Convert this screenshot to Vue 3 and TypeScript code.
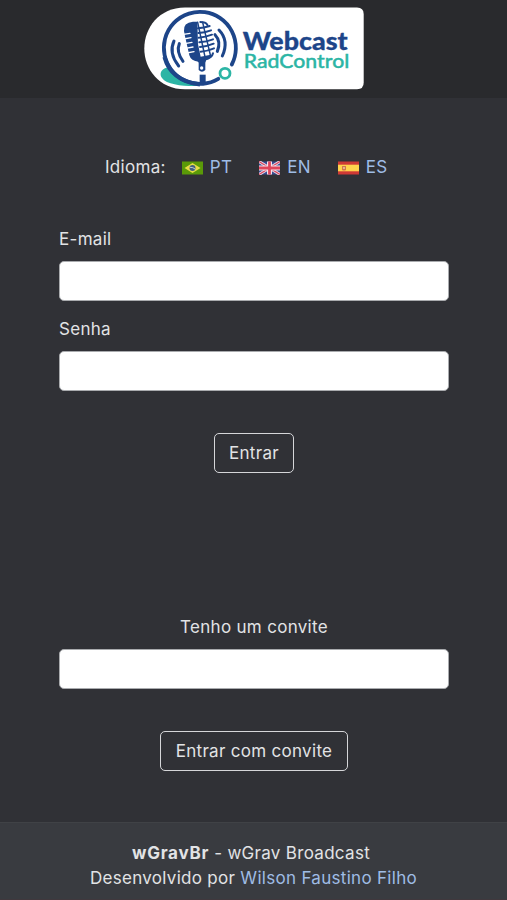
<script setup lang="ts">
import { ref } from 'vue'

const email = ref<string>('')
const password = ref<string>('')
const invite = ref<string>('')
</script>

<template>
  <div class="page">
    <header class="top">
      <svg class="logo" viewBox="0 0 220 83" role="img" aria-label="Webcast RadControl">
        <path d="M41 .5H213Q219.7 .5 219.7 7V75.5Q219.7 82.3 213 82.3H41C15 82.3 .3 62 .3 41.5S15 .5 41 .5Z" fill="#fff" />
        <path d="M23 60.5C17 62 15 67 18 71C23 78 40 79.5 56 79C42 77 31 71 23 60.5Z" fill="#2cb5a5" />
        <path d="M87.8 57.5A36 36 0 1 0 74.3 71.8" fill="none" stroke="#1d4589" stroke-width="3.8" stroke-linecap="round" />
        <path d="M20.5 50Q27 74 56 77.5" fill="none" stroke="#1d4589" stroke-width="4.2" />
        <circle cx="81" cy="66.3" r="5" fill="#fff" stroke="#2cb5a5" stroke-width="2.8" />
        <g transform="translate(14 1) scale(.3333)" fill="none" stroke="#1d4589" stroke-linecap="round">
          <path d="M64 107Q54 132 75 160M48 99Q31 135 62 174" stroke-width="9" />
          <path d="M171 80Q190 100 178 130M183 66Q214 98 193 144" stroke-width="9" />
          <path d="M78 69Q75 44 105 41H118L120 108L128 146L158 140Q158 156 137 158L122 161Q99 160 94 142L81 85Z" fill="#1d4589" stroke="none" />
          <path d="M119 43L142 151M134 43L158 145" stroke-width="4.5" />
          <path d="M127 42Q143 42 148 50M120 61Q138 60 155 54M121 75Q140 74 159 67M122 89Q143 87 162 80M124 103Q146 101 165 94M126 117Q148 115 167 107M128 131Q150 129 168 121M143 153Q162 150 165 136" stroke-width="6" />
          <path d="M76 79L96 76M77 93L99 89M80 107L102 103M83 121L105 117M86 135L108 131" stroke="#fff" stroke-width="4" />
          <path d="M118 158L146 153L142 164V186Q132 197 122 186V164Z" fill="#1d4589" stroke="none" />
          <circle cx="131" cy="180" r="5" fill="#fff" stroke="none" />
          <path d="M134 200V228" stroke-width="18" stroke-linecap="butt" />
        </g>
        <text class="name" x="98.7" y="43" textLength="105" lengthAdjust="spacingAndGlyphs">Webcast</text>
        <text class="sub" x="99.8" y="61.3" textLength="105.5" lengthAdjust="spacingAndGlyphs">RadControl</text>
      </svg>
    </header>

    <main>
      <nav class="languages">
        <span>Idioma:</span>
        <a href="#">
          <svg class="flag" viewBox="0 0 21 14">
            <path fill="#5a9a08" d="M0 .5H21V13.5H0Z" />
            <path fill="#e7dd45" d="M10.5 2L18.5 7L10.5 12L2.5 7Z" />
            <circle cx="10.5" cy="7" r="3" fill="#426080" />
            <path d="M7.7 6.3Q11 6 13.3 8.2" fill="none" stroke="#dce4dc" stroke-width=".8" />
          </svg>
          <span>PT</span>
        </a>
        <a href="#">
          <svg class="flag" viewBox="0 0 21 14">
            <path fill="#374c91" d="M0 .5H21V13.5H0Z" />
            <path stroke="#e8dce8" stroke-width="3" d="M0 .5L21 13.5M21 .5L0 13.5" />
            <path stroke="#d9485f" stroke-width="1.2" d="M0 .5L21 13.5M21 .5L0 13.5" />
            <path stroke="#f2e5ed" stroke-width="5" d="M10.5 .5V13.5M0 7H21" />
            <path stroke="#df455a" stroke-width="2.8" d="M10.5 .5V13.5M0 7H21" />
          </svg>
          <span>EN</span>
        </a>
        <a href="#">
          <svg class="flag" viewBox="0 0 21 14">
            <path fill="#ce3935" d="M0 .5H21V13.5H0Z" />
            <path fill="#ffd34d" d="M0 3.7H21V10.3H0Z" />
            <path fill="#d2774b" d="M4 5H8V9Q6 10 4 9Z" />
            <path fill="#e8c6a0" d="M5.2 6H6.8V8H5.2Z" />
          </svg>
          <span>ES</span>
        </a>
      </nav>

      <form class="login" @submit.prevent>
        <label for="email">E-mail</label>
        <input id="email" v-model="email" type="email" />
        <label for="password">Senha</label>
        <input id="password" v-model="password" type="password" />
        <button type="submit">Entrar</button>
      </form>

      <form class="invite" @submit.prevent>
        <label for="invite">Tenho um convite</label>
        <input id="invite" v-model="invite" type="text" />
        <button type="submit">Entrar com convite</button>
      </form>
    </main>

    <footer>
      <div class="product"><strong>wGravBr</strong> - wGrav Broadcast</div>
      <div class="author">Desenvolvido por <a href="#">Wilson Faustino Filho</a></div>
    </footer>
  </div>
</template>

<style>
body {
  background: #303136;
}
</style>

<style scoped>
.page {
  display: flex;
  flex-direction: column;
  height: 900px;
  overflow: hidden;
  background: #303136;
  color: #e2e3e5;
  font: 17px/25px Inter, "Liberation Sans", sans-serif;
  letter-spacing: 0.3px;
}
.top {
  display: flex;
  justify-content: center;
  box-sizing: border-box;
  height: 98px;
  padding-top: 7px;
  background: #292a2d;
}
.logo {
  width: 220px;
  height: 83px;
}
.name {
  font: 900 24px Lato, sans-serif;
  letter-spacing: 0;
  fill: #1d4589;
  stroke: #1d4589;
  stroke-width: 0.3px;
}
.sub {
  font: 500 19.5px Lato, sans-serif;
  letter-spacing: 0;
  fill: #2cb5a5;
  stroke: #2cb5a5;
  stroke-width: 0.4px;
}
main {
  flex: 1;
  padding: 57px 58px 0 59px;
}
.languages {
  display: flex;
  padding-left: 46px;
  height: 25px;
}
.languages a {
  display: flex;
  align-items: center;
  gap: 7px;
  margin-left: 27px;
}
.languages span + a {
  margin-left: 16px;
}
.flag {
  width: 21px;
  height: 14px;
}
a {
  color: #9fbce5;
  text-decoration: none;
}
form {
  display: flex;
  flex-direction: column;
}
.login {
  margin-top: 47px;
}
label {
  height: 25px;
  margin-bottom: 9px;
}
input {
  box-sizing: border-box;
  width: 100%;
  height: 40px;
  padding: 6px 12px;
  border: 1px solid #a9abae;
  border-radius: 5px;
  background: #fff;
  font: inherit;
}
#email {
  margin-bottom: 16px;
}
button {
  align-self: center;
  height: 40px;
  margin-top: 42px;
  padding: 0 14.5px;
  border: 1.5px solid #d5d6d9;
  border-radius: 5px;
  background: transparent;
  color: inherit;
  font: inherit;
  letter-spacing: inherit;
}
.invite {
  margin-top: 142px;
}
.invite label {
  text-align: center;
}
footer {
  box-sizing: border-box;
  height: 78px;
  padding-top: 18px;
  border-top: 1px solid #404246;
  border-bottom: 1px solid #40383d;
  background: #393b40;
  text-align: center;
}
.product {
  padding-right: 5px;
}
strong {
  font-weight: 700;
  letter-spacing: 0.75px;
}
</style>
